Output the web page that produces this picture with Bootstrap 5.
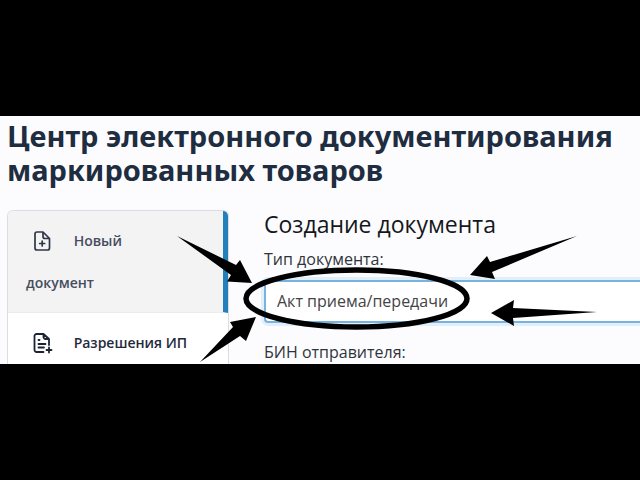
<!DOCTYPE html>
<html lang="ru">
<head>
<meta charset="utf-8">
<meta name="viewport" content="width=device-width, initial-scale=1">
<title>Центр электронного документирования</title>
<link href="https://cdn.jsdelivr.net/npm/bootstrap@5.3.0/dist/css/bootstrap.min.css" rel="stylesheet">
<style>
body { background: #000; font-family: "Open Sans", "Noto Sans", sans-serif; color: #212529; }
.screen { background: #fcfcff; }
.page-title { font-family: "Noto Sans", "Open Sans", sans-serif; font-size: 29px; line-height: 34px; font-weight: 700; color: #1f2d40; padding: 3px 0 0 7px; }
.workspace { padding: 23px 0 0 7px; gap: 35px; }
.side-menu { flex: 0 0 222px; border: 1px solid #dcdde2; border-bottom: 0; border-radius: 6px 6px 0 0; background: #fff; }
.side-link { display: block; font-size: 14px; line-height: 42px; font-weight: 600; color: #1f2a3c; text-decoration: none; padding: 9px 16px 0 18px; }
.side-link.current { background: #f3f3f3; color: #474d60; border-right: 5px solid #2480bb; border-bottom: 1px solid #ececec; border-radius: 5px 5px 0 0; padding-right: 40px; padding-bottom: 8px; }
.side-link svg { margin: 0 17px 2px 5px; }
.doc-title { font-size: 23px; line-height: 28px; font-weight: 400; color: #15171a; margin: 0 0 11px; }
.field-label { font-size: 16px; line-height: 20px; color: #30343a; display: block; }
.type-input { height: 43px; font-size: 16px; color: #444; border: 2px solid #79b2dc; border-right: 0; border-radius: 4px 0 0 4px; box-shadow: 0 0 0 3px #e0effb; padding: 0 11px 2px; margin: 11px 0 19px; }
.type-input:focus { border-color: #79b2dc; box-shadow: 0 0 0 3px #e0effb; color: #444; }
.next-field { margin-bottom: 2px; }
.marks { pointer-events: none; }
</style>
<script src="https://cdn.jsdelivr.net/npm/bootstrap@5.3.0/dist/js/bootstrap.bundle.min.js"></script>
</head>
<body class="min-vh-100 d-flex flex-column justify-content-center">
<main class="screen position-relative overflow-hidden">
  <h1 class="page-title m-0">Центр электронного документирования маркированных товаров</h1>
  <div class="workspace d-flex">
    <nav class="side-menu" aria-label="Меню">
      <a href="#" class="side-link current" aria-current="page"><svg width="22" height="22" viewBox="0 0 22 22" fill="none" stroke="#303649" stroke-width="1.7" stroke-linecap="round" stroke-linejoin="round" aria-hidden="true"><path d="M12 2H6a2 2 0 0 0-2 2v14a2 2 0 0 0 2 2h10.500a2 2 0 0 0 2-2V8.500zM12 2v4.500a2 2 0 0 0 2 2h4.500M11.200 11v5M8.700 13.500h5"/></svg> Новый документ</a>
      <a href="#" class="side-link"><svg width="22" height="22" viewBox="0 0 22 22" fill="none" stroke="#1c2333" stroke-width="1.800" stroke-linecap="round" stroke-linejoin="round" aria-hidden="true"><path d="M12.500 20H5.500a2 2 0 0 1-2-2V4a2 2 0 0 1 2-2h7l5.500 5v6M12.500 2v3a2 2 0 0 0 2 2H18M7.500 8h1M7.500 12h7M7.500 15.500h5.500M18 15.500v5M15.500 18h5"/></svg> Разрешения ИП</a>
    </nav>
    <form class="flex-grow-1">
      <h2 class="doc-title">Создание документа</h2>
      <label class="field-label" for="doc-type">Тип документа:</label>
      <input id="doc-type" class="type-input form-control" type="text" value="Акт приема/передачи">
      <span class="field-label next-field">БИН отправителя:</span>
    </form>
  </div>
  <svg class="marks position-absolute top-0 start-0" width="640" height="248" viewBox="0 116 640 248" aria-hidden="true">
    <ellipse cx="356.500" cy="298.500" rx="110.500" ry="28.500" fill="none" stroke="#000" stroke-width="5.500"/>
    <path d="M177 236L236 265L240 260L252 283L227 281.500L231 275Z"/>
    <path d="M200 362L233 327L230 322L256 317L246 341L240 336Z"/>
    <path d="M577 236L492 272L495 279L470 275L487 256L490 262Z"/>
    <path d="M597 312L513 308L514 300L491 313L514 326L513 318Z"/>
  </svg>
</main>
</body>
</html>
